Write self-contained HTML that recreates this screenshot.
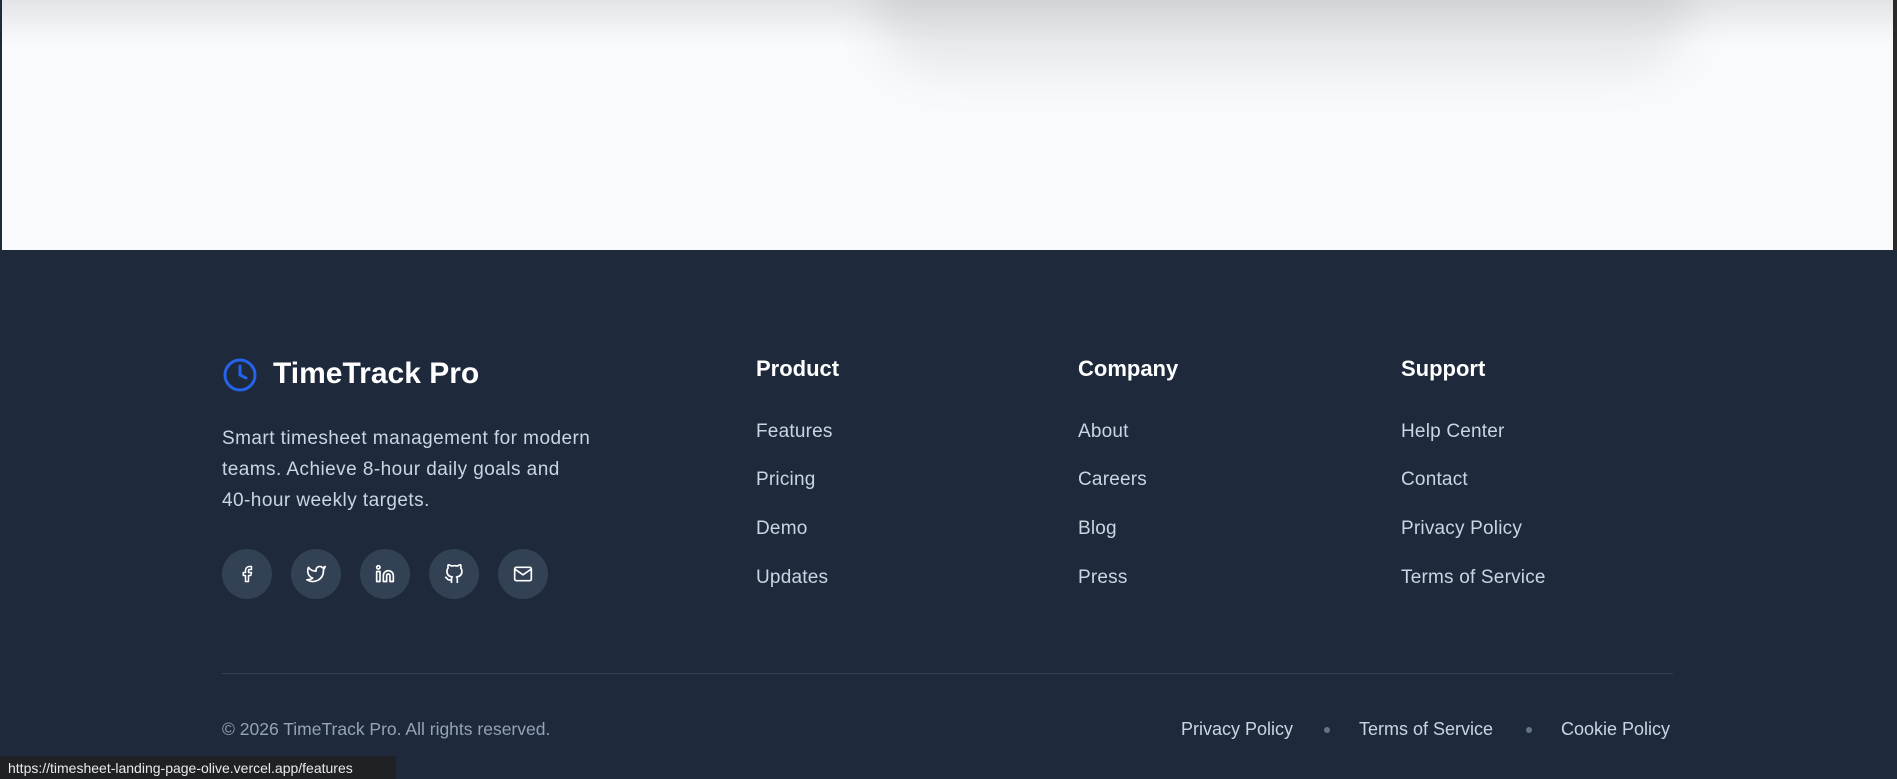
<!DOCTYPE html>
<html><head><meta charset="utf-8"><style>
*{margin:0;padding:0;box-sizing:border-box}
html,body{width:1897px;height:779px;overflow:hidden;font-family:"Liberation Sans",sans-serif}
body{background:#1e293b;position:relative}
.top{position:absolute;left:2px;top:0;width:1891px;height:250px;background:#f8fafc;overflow:hidden}
.sh1{position:absolute;left:0;right:0;top:0;height:45px;background:linear-gradient(to bottom,rgba(0,0,0,.09),rgba(0,0,0,.03) 60%,rgba(0,0,0,0))}
.sh2{position:absolute;left:870px;width:820px;top:-60px;height:130px;border-radius:80px;background:rgba(0,0,0,.07);filter:blur(22px)}
.edge{position:absolute;right:0;top:0;width:4px;height:250px;background:#2a2a2a}
.abs{position:absolute;white-space:nowrap}
.title{left:273px;top:357px;font-size:30px;font-weight:bold;color:#fff}
.desc{left:222px;top:423px;font-size:19px;line-height:31px;color:#cbd5e1;letter-spacing:.45px}
.soc{position:absolute;top:549px;width:50px;height:50px;border-radius:50%;background:#334155;display:flex;align-items:center;justify-content:center}
.h{font-size:22px;font-weight:bold;color:#fff;top:356px}
.l{font-size:19px;color:#cbd5e1;letter-spacing:.2px}
.sep{position:absolute;left:222px;top:673px;width:1451px;height:1px;background:#334155}
.b{font-size:18px;color:#cbd5e1;top:719px}
.dot{position:absolute;top:727px;width:6px;height:6px;border-radius:50%;background:#64748b}
.status{position:absolute;left:0;top:756px;width:396px;height:23px;background:#202124;color:#e8eaed;font-size:14px;padding:4px 0 0 8px;white-space:nowrap}
</style></head><body>
<div class="top"><div class="sh2"></div><div class="sh1"></div></div>
<div class="edge"></div>
<svg class="abs" style="left:222px;top:357px" width="36" height="36" viewBox="0 0 24 24" fill="none" stroke="#2563eb" stroke-width="2" stroke-linecap="round"><circle cx="12" cy="12" r="10"/><path d="M12 6v6l4 2"/></svg>
<div class="abs title">TimeTrack Pro</div>
<div class="abs desc">Smart timesheet management for modern<br>teams. Achieve 8-hour daily goals and<br>40-hour weekly targets.</div>
<div class="soc" style="left:222px"><svg width="18" height="18" viewBox="0 0 24 24" fill="none" stroke="#fff" stroke-width="2" stroke-linejoin="round"><path d="M18 2h-3a5 5 0 0 0-5 5v3H7v4h3v8h4v-8h3l1-4h-4V7a1 1 0 0 1 1-1h3z"/></svg></div>
<div class="soc" style="left:291px"><svg width="20" height="20" viewBox="0 0 24 24" fill="none" stroke="#fff" stroke-width="2" stroke-linejoin="round"><path d="M23 3a10.9 10.9 0 0 1-3.14 1.53 4.48 4.48 0 0 0-7.86 3v1A10.66 10.66 0 0 1 3 4s-4 9 5 13a11.64 11.64 0 0 1-7 2c9 5 20 0 20-11.5a4.5 4.5 0 0 0-.08-.83A7.72 7.72 0 0 0 23 3z"/></svg></div>
<div class="soc" style="left:360px"><svg width="20" height="20" viewBox="0 0 24 24" fill="none" stroke="#fff" stroke-width="2" stroke-linejoin="round"><path d="M16 8a6 6 0 0 1 6 6v7h-4v-7a2 2 0 0 0-4 0v7h-4v-7a6 6 0 0 1 6-6z"/><rect x="2" y="9" width="4" height="12"/><circle cx="4" cy="4" r="2"/></svg></div>
<div class="soc" style="left:429px"><svg width="20" height="20" viewBox="0 0 24 24" fill="none" stroke="#fff" stroke-width="2" stroke-linecap="round" stroke-linejoin="round"><path d="M9 19c-5 1.5-5-2.5-7-3m14 6v-3.870a3.37 3.37 0 0 0-.94-2.61c3.140-.35 6.440-1.54 6.440-7A5.440 5.440 0 0 0 20 4.77 5.070 5.070 0 0 0 19.910 1S18.730.65 16 2.48a13.380 13.380 0 0 0-7 0C6.270.65 5.090 1 5.090 1A5.070 5.070 0 0 0 5 4.77a5.440 5.440 0 0 0-1.500 3.780c0 5.420 3.300 6.610 6.440 7A3.370 3.370 0 0 0 9 18.130V22"/></svg></div>
<div class="soc" style="left:498px"><svg width="20" height="20" viewBox="0 0 24 24" fill="none" stroke="#fff" stroke-width="2" stroke-linejoin="round"><rect x="2" y="4" width="20" height="16" rx="2"/><path d="M22 6l-10 7L2 6"/></svg></div>

<div class="abs h" style="left:756px">Product</div>
<div class="abs l" style="left:756px;top:421px">Features</div>
<div class="abs l" style="left:756px;top:469px">Pricing</div>
<div class="abs l" style="left:756px;top:518px">Demo</div>
<div class="abs l" style="left:756px;top:567px">Updates</div>

<div class="abs h" style="left:1078px">Company</div>
<div class="abs l" style="left:1078px;top:421px">About</div>
<div class="abs l" style="left:1078px;top:469px">Careers</div>
<div class="abs l" style="left:1078px;top:518px">Blog</div>
<div class="abs l" style="left:1078px;top:567px">Press</div>

<div class="abs h" style="left:1401px">Support</div>
<div class="abs l" style="left:1401px;top:421px">Help Center</div>
<div class="abs l" style="left:1401px;top:469px">Contact</div>
<div class="abs l" style="left:1401px;top:518px">Privacy Policy</div>
<div class="abs l" style="left:1401px;top:567px">Terms of Service</div>

<div class="sep"></div>
<div class="abs b" style="left:222px;color:#94a3b8;font-size:17.5px">© 2026 TimeTrack Pro. All rights reserved.</div>
<div class="abs b" style="left:1181px">Privacy Policy</div>
<div class="dot" style="left:1324px"></div>
<div class="abs b" style="left:1359px">Terms of Service</div>
<div class="dot" style="left:1526px"></div>
<div class="abs b" style="left:1561px">Cookie Policy</div>
<div class="status">https://timesheet-landing-page-olive.vercel.app/features</div>
</body></html>
